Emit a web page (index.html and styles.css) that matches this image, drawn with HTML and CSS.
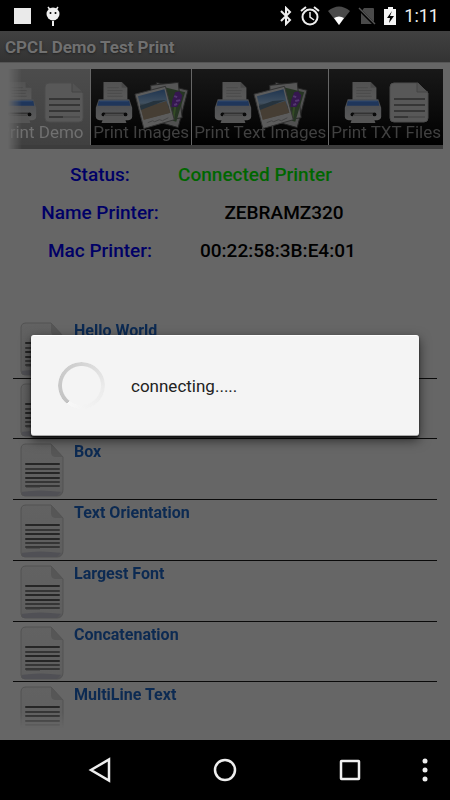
FILE: index.html
```html
<!DOCTYPE html>
<html lang="en">
<head>
<meta charset="utf-8">
<meta name="viewport" content="width=device-width, initial-scale=1">
<title>CPCL Demo Test Print</title>
<link rel="stylesheet" href="styles.css">
</head>
<body>
<svg class="defs" aria-hidden="true">
  <defs>
    <linearGradient id="paper" x1="0" y1="0" x2="0" y2="1"><stop offset="0" stop-color="#525252"/><stop offset="1" stop-color="#5a5a5a"/></linearGradient>
    <linearGradient id="body" x1="0" y1="0" x2="0" y2="1"><stop offset="0" stop-color="#4a4c50"/><stop offset="1" stop-color="#5a5a5a"/></linearGradient>
    <linearGradient id="sky" x1="0" y1="0" x2="0" y2="1"><stop offset="0" stop-color="#1f3550"/><stop offset=".45" stop-color="#405060"/><stop offset=".55" stop-color="#2c343a"/><stop offset="1" stop-color="#50463a"/></linearGradient>
    <linearGradient id="sheet" x1="0" y1="0" x2="0" y2="1"><stop offset="0" stop-color="#626262"/><stop offset=".9" stop-color="#5e5e5e"/><stop offset="1" stop-color="#505055"/></linearGradient>
    <symbol id="printer" viewBox="0 0 40 46">
      <path d="M9 2h19l6 6v16H9z" fill="url(#paper)"/>
      <path d="M28 2l6 6h-6z" fill="#484848"/>
      <path d="M13 8h12M13 11h16M13 14h15M13 17h16" stroke="#4a4a4a"/>
      <path d="M4 20h32l3 9v9q0 4-4 4H5q-4 0-4-4v-9z" fill="url(#body)"/>
      <path d="M4 22h32l1 5H3z" fill="#1f365b"/>
      <path d="M5 22h30" stroke="#304b70"/>
      <path d="M9 35h22" stroke="#333" stroke-width="2"/>
      <circle cx="9" cy="36" r="2" fill="#0a0a0a"/><circle cx="32" cy="36" r="2" fill="#0a0a0a"/>
      <path d="M10 36h20l3 9H7z" fill="#555"/><path d="M10 37h20" stroke="#444"/>
    </symbol>
    <symbol id="doc" viewBox="0 0 40 41">
      <path d="M5 1h24l10 10v25q0 4-4 4H5q-4 0-4-4V5q0-4 4-4z" fill="#585858" stroke="#4c4c4c"/>
      <path d="M28 1v9h11z" fill="#525252"/><path d="M28 1v9h11" fill="none" stroke="#444"/>
      <path d="M5 17h31M5 23h31M5 29h31M5 35h14" stroke="#363636" stroke-width="2"/>
      <path d="M19 35h17" stroke="#404040"/>
    </symbol>
    <symbol id="photos" viewBox="0 0 56 50">
      <path d="M23 2l32 8-10 38-32-9z" fill="#505050" stroke="#222"/>
      <path d="M17 5l28-3 4 36-30 4z" fill="#565656" stroke="#282828"/>
      <path d="M31 7l21 5-9 30-14-4z" fill="#263523"/>
      <path d="M42 12l4-1 3 4-1 6-4 6-6 0 1-7z" fill="#35184f"/>
      <path d="M41 16l3 1M43 21l4-1M41 25l3-1" stroke="#543671" stroke-width="2"/>
      <path d="M42 27l-2 12" stroke="#344b25" stroke-width="2"/>
      <path d="M1 14l31-8 9 34-31 9z" fill="#5c5c5c" stroke="#333"/>
      <path d="M4 16l27-7 6 24-27 7z" fill="url(#sky)"/>
      <path d="M7 29l26-8 4 12-27 7z" fill="#463e34"/>
      <path d="M6 26l14-5 13-1-26 10z" fill="#26333d"/>
      <path d="M14 43l5-2 2 1 5-2 3 1 6-3" fill="none" stroke="#444"/>
    </symbol>
    <symbol id="sheet-icon" viewBox="0 0 44 54">
      <path d="M6 1h25l12 13v32q0 7-6 7H5q-4 0-4-4V6q0-5 5-5z" fill="url(#sheet)" stroke="#525252"/>
      <path d="M2 49q18-3 39 0l-5 4H5q-3 0-3-4z" fill="#505055"/>
      <path d="M31 1v8q0 5 5 5h7z" fill="#565656"/>
      <path d="M6 21h33M6 30h33M6 35h33" stroke="#262626" stroke-width="2" stroke-linecap="round"/>
      <path d="M6 26h33M6 39h33M6 43h33" stroke="#353535" stroke-width="2" stroke-linecap="round"/>
      <path d="M6 44h14" stroke="#3a3a3a"/>
    </symbol>
  </defs>
</svg>

<header class="status-bar">
  <div class="status-group notices">
    <svg width="18" height="18" viewBox="0 0 18 18" aria-hidden="true"><path d="M0 1h17v16H0z" fill="#eaeaea"/></svg>
    <svg width="14" height="22" viewBox="0 0 14 22" fill="#eee" aria-hidden="true"><circle cx="7" cy="9" r="6.5"/><path d="M2 2l3 4M12 2L9 6" stroke="#eee" stroke-width="1.5"/><path d="M6 16h2v5H6z"/><circle cx="4.500" cy="8" r="1" fill="#000"/><circle cx="9.500" cy="8" r="1" fill="#000"/></svg>
  </div>
  <div class="status-group">
    <svg width="12" height="20" viewBox="0 0 12 20" fill="none" stroke="#eee" stroke-width="2" aria-hidden="true"><path d="M1 5l9 9-4 4V2l4 4-9 9"/></svg>
    <svg width="20" height="20" viewBox="0 0 20 20" fill="none" stroke="#eee" stroke-width="2" aria-hidden="true"><circle cx="10" cy="11" r="7.500"/><path d="M1 5l5-4M19 5l-5-4"/><path d="M10 6v5l4 3" stroke-width="1.500"/></svg>
    <svg width="22" height="20" viewBox="0 0 22 20" aria-hidden="true"><path d="M0 5Q11-4 22 5L11 19z" fill="#4a4a4a"/><path d="M6 12q5-3 10 0l-5 7z" fill="#fff"/></svg>
    <svg width="18" height="20" viewBox="0 0 18 20" aria-hidden="true"><path d="M6 2h9q1 0 1 1v15H3V6z" fill="#4a4a4a"/><path d="M1 3l16 16" stroke="#000" stroke-width="3"/><path d="M1 2l16 16" stroke="#555" stroke-width="1.500"/></svg>
    <svg width="12" height="20" viewBox="0 0 12 20" aria-hidden="true"><path d="M0 3h4V1h5v2h3v16H0z" fill="#f4f4f4"/><path d="M8 5l-5 7h3l-1 5 5-7H6z" fill="#000"/></svg>
    <time class="clock">1:11</time>
  </div>
</header>

<div class="app">
  <h1 class="title">CPCL Demo Test Print</h1>
  <nav class="tabs" aria-label="Print modes">
    <button class="tab tab-selected" type="button"><span class="art"><svg class="printer"><use href="#printer"/></svg><svg class="doc"><use href="#doc"/></svg></span><span class="tab-label">Print Demo</span></button>
    <button class="tab" type="button"><span class="art art-tight"><svg class="printer"><use href="#printer"/></svg><svg class="photos"><use href="#photos"/></svg></span><span class="tab-label">Print Images</span></button>
    <button class="tab" type="button"><span class="art art-tight"><svg class="printer"><use href="#printer"/></svg><svg class="photos"><use href="#photos"/></svg></span><span class="tab-label">Print Text Images</span></button>
    <button class="tab" type="button"><span class="art"><svg class="printer"><use href="#printer"/></svg><svg class="doc"><use href="#doc"/></svg></span><span class="tab-label">Print TXT Files</span></button>
  </nav>

  <dl class="info">
    <div class="info-row"><dt>Status:</dt><dd class="connected">Connected Printer</dd></div>
    <div class="info-row"><dt>Name Printer:</dt><dd class="name">ZEBRAMZ320</dd></div>
    <div class="info-row"><dt>Mac Printer:</dt><dd class="mac">00:22:58:3B:E4:01</dd></div>
  </dl>

  <div class="scroller">
    <ul class="list">
      <li><svg><use href="#sheet-icon"/></svg><span>Hello World</span></li>
      <li><svg><use href="#sheet-icon"/></svg></li>
      <li><svg><use href="#sheet-icon"/></svg><span>Box</span></li>
      <li><svg><use href="#sheet-icon"/></svg><span>Text Orientation</span></li>
      <li><svg><use href="#sheet-icon"/></svg><span>Largest Font</span></li>
      <li><svg><use href="#sheet-icon"/></svg><span>Concatenation</span></li>
      <li><svg><use href="#sheet-icon"/></svg><span>MultiLine Text</span></li>
    </ul>
  </div>

  <div class="overlay">
    <div class="dialog" role="dialog" aria-label="Progress">
      <div class="spinner"></div>
      <p>connecting.....</p>
    </div>
  </div>
</div>

<footer class="nav-bar">
  <button type="button" aria-label="Back"><svg width="24" height="26" viewBox="0 0 24 26"><path d="M21 2.500v21L3 13z"/></svg></button>
  <button type="button" aria-label="Home"><svg width="24" height="24" viewBox="0 0 24 24"><circle cx="12" cy="12" r="10"/></svg></button>
  <button type="button" aria-label="Recent apps"><svg width="24" height="24" viewBox="0 0 24 24"><rect x="3" y="3" width="18" height="18" rx=".5"/></svg></button>
  <button class="more" type="button" aria-label="More options"><svg width="6" height="24" viewBox="0 0 6 24"><g fill="#eee" stroke="none"><circle cx="3" cy="3" r="2.500"/><circle cx="3" cy="12" r="2.500"/><circle cx="3" cy="21" r="2.500"/></g></svg></button>
</footer>
</body>
</html>
```

FILE: styles.css
```css
* { box-sizing: border-box; }

body {
  margin: 0;
  min-height: 100vh;
  display: flex;
  flex-direction: column;
  background: #666;
  font-family: Roboto, "Liberation Sans", sans-serif;
  overflow-x: hidden;
}

button {
  padding: 0;
  border: 0;
  background: none;
  font: inherit;
}

svg { display: block; flex: none; }
.defs { position: absolute; width: 0; height: 0; }

.status-bar {
  display: flex;
  justify-content: space-between;
  align-items: center;
  height: 31px;
  padding: 0 11px 0 14px;
  background: #000;
}
.status-group { display: flex; align-items: center; gap: 8px; }
.notices { gap: 14px; }
.clock { color: #eee; font-size: 18px; line-height: 24px; font-weight: 400; }

.app {
  position: relative;
  flex: 1;
  display: flex;
  flex-direction: column;
}

.title {
  margin: 0;
  padding: 0 5px;
  height: 32px;
  line-height: 32px;
  font-size: 17px;
  font-weight: 700;
  color: #707070;
  text-shadow: 0 1px 2px #222;
  background: linear-gradient(#414141, #333);
  border-bottom: 1px solid #555;
}

.tabs {
  display: flex;
  justify-content: flex-end;
  gap: 1px;
  margin: 6px 7px 0 8px;
  padding-bottom: 4px;
  overflow: hidden;
  background: linear-gradient(#666, #666) top / 100% 76px no-repeat #3c3c3c;
  -webkit-mask-image: linear-gradient(to right, transparent, #000 14px);
  mask-image: linear-gradient(to right, transparent, #000 14px);
}
.tab {
  flex: none;
  display: flex;
  flex-direction: column;
  align-items: center;
  min-width: 98px;
  height: 76px;
  padding: 11px 2px 0;
  background: linear-gradient(#181818, #000);
  color: #404040;
  font-size: 17px;
  line-height: 22px;
}
.tab-selected { background: linear-gradient(#4c4c4c, #404040); color: #707070; }
.art { display: flex; align-items: flex-start; gap: 6px; height: 41px; }
.art-tight { gap: 0; }
.printer { width: 40px; height: 44px; }
.doc { width: 40px; height: 41px; margin-top: 2px; }
.photos { width: 55px; height: 50px; }
.tab-label { position: relative; white-space: nowrap; }

.info { margin: 7px 0 0; }
.info-row {
  display: flex;
  align-items: center;
  height: 38px;
  font-size: 19px;
  line-height: 24px;
  font-weight: 500;
}
dt { width: 200px; text-align: center; color: #000066; }
dd { margin: 0; width: 154px; text-align: center; white-space: nowrap; color: #000; }
.connected { margin-left: -22px; color: #006600; }
.name { margin-left: 7px; }

.scroller {
  height: 410px;
  margin: 48px 13px 0;
  overflow: hidden;
  -webkit-mask-image: linear-gradient(to top, transparent, #000 16px);
  mask-image: linear-gradient(to top, transparent, #000 16px);
}
.list {
  display: grid;
  grid-template-rows: repeat(7, 1fr);
  height: 425px;
  margin: 0;
  padding: 0;
  list-style: none;
}
.list li {
  display: flex;
  align-items: flex-start;
  gap: 10px;
  padding: 4px 7px 0;
  border-bottom: 1px solid #0a0a0a;
  color: #0c2a52;
  font-size: 16px;
  line-height: 18px;
  font-weight: 700;
}
.list svg { width: 44px; height: 54px; }

.overlay {
  position: absolute;
  inset: 0;
  display: flex;
  align-items: center;
  padding: 0 31px;
}
.dialog {
  flex: 1;
  display: flex;
  align-items: center;
  gap: 26px;
  height: 101px;
  padding: 0 27px;
  border-radius: 3px;
  background: #f4f4f4;
  border-top: 1px solid #fff;
  border-bottom: 1px solid #aaa;
  box-shadow: 0 2px 2px rgba(0, 0, 0, .7), 0 4px 12px rgba(0, 0, 0, .6);
}
.dialog p { margin: 0; color: #222; font-size: 17px; line-height: 22px; }
.spinner {
  width: 47px;
  height: 47px;
  border-radius: 50%;
  background: conic-gradient(from 218deg, #c2c2c2, #d0d0d0 35%, #ebebeb 65%, #f8f8f8);
  -webkit-mask-image: radial-gradient(circle, transparent 19px, #000 20px);
  mask-image: radial-gradient(circle, transparent 19px, #000 20px);
}

.nav-bar {
  position: relative;
  display: flex;
  justify-content: center;
  align-items: center;
  gap: 101px;
  height: 60px;
  background: #000;
}
.nav-bar svg { fill: none; stroke: #eee; stroke-width: 2.5px; }
.more { position: absolute; right: 22px; top: 18px; }
```
